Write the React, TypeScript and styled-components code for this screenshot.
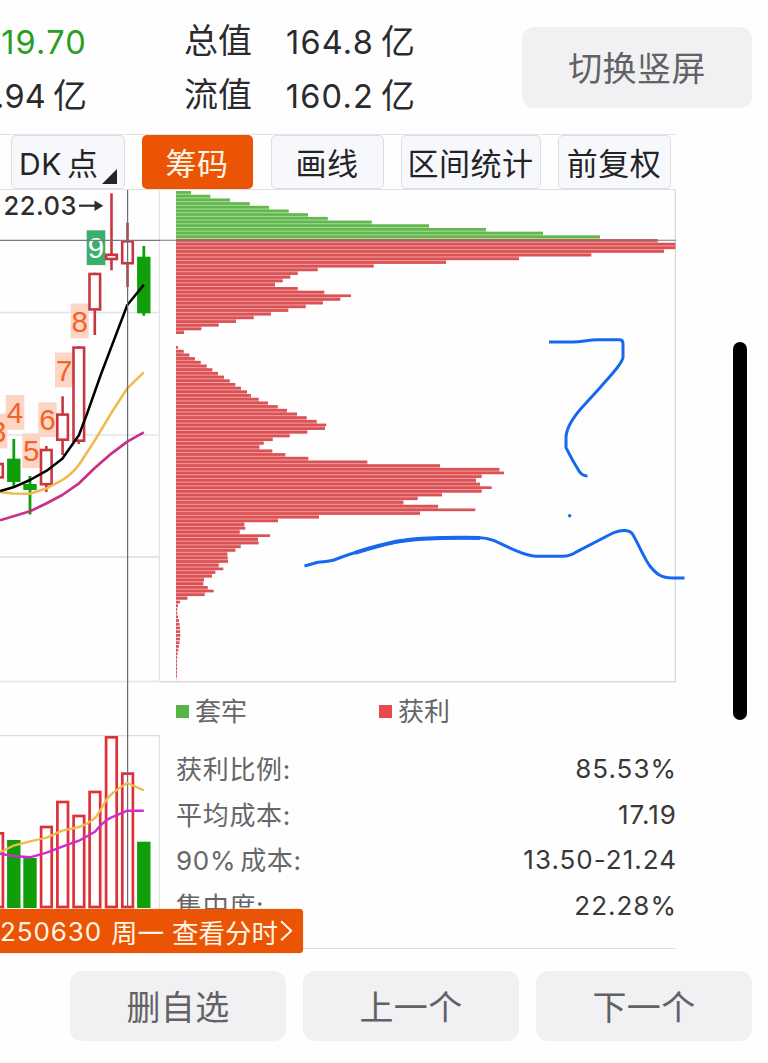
import React from "react";
import styled, { createGlobalStyle } from "styled-components";

const GlobalStyle = createGlobalStyle`
  *, *::before, *::after { box-sizing: border-box; }
  body {
    margin: 0;
    background: #fefefe;
    font-family: Inter, "Noto Sans CJK SC", sans-serif;
    color: #2b2b2d;
  }
`;

const Page = styled.main`
  position: relative;
  display: flex;
  flex-direction: column;
  width: 768px;
  height: 1063px;
  overflow: hidden;
  background: #fefefe;
  border-bottom: 1px solid #f5f5f5;
`;

const Header = styled.header`
  display: flex;
  height: 134px;
  padding: 15px 16px 0 0;
`;

const StatColumn = styled.div<{ $width: number; $align?: string; $gap?: number }>`
  display: flex;
  flex-direction: column;
  align-items: ${(p) => p.$align ?? "flex-start"};
  width: ${(p) => p.$width}px;
  margin-left: ${(p) => p.$gap ?? 0}px;
`;

const StatLine = styled.div<{ $color?: string; $spacing?: number }>`
  display: flex;
  align-items: center;
  height: 54px;
  font-size: 32.5px;
  letter-spacing: ${(p) => p.$spacing ?? 1.2}px;
  white-space: nowrap;
  color: ${(p) => p.$color ?? "#2b2b2d"};
`;

const StatName = styled.div`
  height: 54px;
  font-size: 34px;
  line-height: 52px;
  white-space: nowrap;
`;

const Unit = styled.span`
  margin-left: 7px;
  padding-bottom: 5px;
  font-size: 34px;
  letter-spacing: 0;
`;

const SoftButton = styled.button<{ $width: number; $height: number }>`
  display: flex;
  align-items: center;
  justify-content: center;
  flex: none;
  width: ${(p) => p.$width}px;
  height: ${(p) => p.$height}px;
  padding: 0 0 2px;
  border: 0;
  border-radius: 12px;
  background: #f1f1f4;
  color: #626264;
  font-family: inherit;
  font-size: 34px;
  letter-spacing: 0.4px;
`;

const SwitchButton = styled(SoftButton)`
  margin: 12px 0 0 auto;
`;

const Toolbar = styled.nav`
  display: flex;
  align-items: center;
  width: 676px;
  height: 56px;
  padding-left: 11px;
  border-top: 1px solid #e2e2e7;
  border-bottom: 1px solid #dfdfe4;
`;

const Tab = styled.button<{ $width: number; $gap: number; $active?: boolean }>`
  position: relative;
  flex: none;
  width: ${(p) => p.$width}px;
  height: 54px;
  margin-right: ${(p) => p.$gap}px;
  padding: 0 1px 1px 0;
  border: ${(p) => (p.$active ? "0" : "1.5px solid #dcdce3")};
  border-radius: 5px;
  background: ${(p) => (p.$active ? "#ea5404" : "#f7f8fc")};
  color: ${(p) => (p.$active ? "#fff5e6" : "#242426")};
  font-family: inherit;
  font-size: 31px;
  letter-spacing: 0.5px;
  white-space: nowrap;
`;

const TabLatin = styled.span`
  font-size: 30px;
  letter-spacing: 0.6px;
  margin-right: 5px;
`;

const DkLabel = styled.span`
  display: block;
  padding-left: 7px;
  text-align: left;
`;

const Corner = styled.i`
  position: absolute;
  right: 7px;
  bottom: 4px;
  border-left: 15px solid transparent;
  border-bottom: 15px solid #242426;
`;

const Body = styled.section`
  display: flex;
  height: 759px;
`;

const Charts = styled.div`
  display: flex;
  flex-direction: column;
  width: 160px;
`;

const Drawing = styled.svg`
  display: block;
  flex: none;
`;

const ChipPanel = styled.div`
  display: flex;
  flex-direction: column;
  width: 516px;
  border-bottom: 1px solid #dedee2;
`;

const Legend = styled.div`
  display: flex;
  align-items: center;
  height: 57px;
  padding: 0 0 0 16px;
`;

const LegendItem = styled.span<{ $color: string }>`
  display: flex;
  align-items: center;
  width: 203px;
  color: #666668;
  font-size: 26px;
  line-height: 38px;
  &::before {
    content: "";
    width: 13px;
    height: 13px;
    margin-right: 6px;
    background: ${(p) => p.$color};
  }
`;

const Metrics = styled.dl`
  margin: 0;
  padding: 7px 0 0 16px;
`;

const Metric = styled.div`
  display: flex;
  align-items: center;
  justify-content: space-between;
  height: 45.5px;
  font-size: 26px;
`;

const MetricName = styled.dt`
  padding-bottom: 4px;
  color: #666668;
  letter-spacing: 0.7px;
  word-spacing: -4px;
`;

const MetricValue = styled.dd`
  margin: 0 -1px 0 0;
  padding-bottom: 2px;
  color: #38383a;
  letter-spacing: 1px;
`;

const Rail = styled.aside`
  width: 92px;
  padding: 152px 0 0 57px;
`;

const RailHandle = styled.div`
  width: 14px;
  height: 378px;
  border-radius: 7px;
  background: #000;
`;

const DateBanner = styled.div`
  position: absolute;
  left: 0;
  top: 909px;
  display: flex;
  align-items: center;
  justify-content: flex-end;
  width: 303px;
  height: 44px;
  padding: 1px 9px 0 0;
  border-radius: 0 4px 4px 0;
  background: #ea5404;
  box-shadow: 0 0 1px #ea5404;
  color: #fff5e6;
  font-size: 26.5px;
  white-space: nowrap;
`;

const BannerDate = styled.span`
  font-size: 26px;
  letter-spacing: 0.9px;
  margin-right: 9px;
`;

const BannerDay = styled.span`
  margin-right: 8px;
`;

const Ink = styled.svg`
  position: absolute;
  left: 290px;
  top: 330px;
  pointer-events: none;
`;

const Footer = styled.footer`
  display: flex;
  justify-content: flex-end;
  gap: 17px;
  padding: 22px 16px 0 0;
`;

type Candle = { x: number; top: number; bottom: number; high: number; low: number; up: boolean };

const candles: Candle[] = [
  { x: -2.5, top: 462.7, bottom: 478.7, high: 462.7, low: 478.7, up: true },
  { x: 13.8, top: 458.7, bottom: 482, high: 439, low: 486, up: false },
  { x: 30, top: 484, bottom: 490, high: 476, low: 514.5, up: false },
  { x: 46.3, top: 448.7, bottom: 485.5, high: 446, low: 492, up: true },
  { x: 62.6, top: 413.3, bottom: 441, high: 396.3, low: 455, up: true },
  { x: 78.8, top: 346.3, bottom: 442, high: 346.3, low: 444, up: true },
  { x: 94.8, top: 272.7, bottom: 310.7, high: 272.7, low: 335, up: true },
  { x: 111.5, top: 253.5, bottom: 260.3, high: 193.3, low: 270.3, up: true },
  { x: 127.5, top: 240, bottom: 264.5, high: 222.7, low: 287, up: true },
  { x: 143.8, top: 256.7, bottom: 313.3, high: 246, low: 315.7, up: false },
];

const counts = [
  { n: "3", x: -11, y: 413.5, w: 18.3 },
  { n: "4", x: 5.7, y: 395, w: 18.6 },
  { n: "5", x: 22.3, y: 433.3, w: 17.7 },
  { n: "6", x: 38.3, y: 402.3, w: 18.4 },
  { n: "7", x: 55, y: 352.5, w: 18.3 },
  { n: "8", x: 70.7, y: 303.5, w: 18 },
  { n: "9", x: 86.7, y: 230.3, w: 18.6 },
];

const volumes = [
  { x: -2.5, y: 832, up: true },
  { x: 13.8, y: 841, up: false },
  { x: 30, y: 859, up: false },
  { x: 46.3, y: 825.7, up: true },
  { x: 62.6, y: 800.7, up: true },
  { x: 78.8, y: 814.7, up: true },
  { x: 94.8, y: 790.7, up: true },
  { x: 111.3, y: 736, up: true },
  { x: 127.5, y: 772.3, up: true },
  { x: 143.8, y: 842.7, up: false },
];

// Right end of every cost row, from the highest price down; 0 marks an empty row.
const chipEnds = [
  191, 210.3, 230, 249.7, 269, 288.7, 308, 327.7, 371.7, 429, 486, 543, 600,
  657.7, 675.5, 675.5, 664, 591.3, 519, 446, 373.7, 317.7, 297.7, 290.3, 282.7,
  275, 297.7, 324.3, 351, 340.3, 323, 305.7, 288.3, 271, 253.7, 236, 218.7,
  201.3, 184, 0, 0, 0, 178, 183.7, 189.3, 195, 200.7, 206.7, 212.3, 218, 224,
  229.7, 235.3, 241, 247, 251, 258.7, 268, 277.7, 287, 297, 306.7, 316.7, 326.3,
  325, 307.3, 289.7, 272.7, 263.7, 259.3, 272.3, 285.3, 308.3, 367.3, 440,
  499.3, 504, 481.7, 476, 480, 491.7, 481.7, 442, 417.7, 403.3, 438, 475.3, 420,
  319, 278, 244.3, 245.3, 239.7, 270, 258, 258.7, 240.7, 235.3, 227.3, 227.7,
  228, 218.7, 223.3, 215.3, 212, 204, 203.3, 207.7, 213.7, 204.7, 187.3, 180,
  178, 177.2, 177.2, 178, 179, 179.5, 180, 180.2, 180.4, 180, 179.5, 179, 178.3,
  177.6, 177.2, 177, 177, 177, 177, 177,
];

const CHIP_PITCH = 3.691;
const FIRST_PROFIT_ROW = 13;

function PriceChart() {
  return (
    <Drawing width="160" height="545" viewBox="0 190 160 545">
      <g stroke="#e3e3ec" strokeWidth="1.5">
        <path d="M0 312.5H159M0 435H159M0 681.5H159" />
        <path d="M0 557H159" strokeWidth="2" />
        <path d="M159.5 190V682" />
      </g>
      {counts.map((c) => (
        <g key={c.n}>
          <rect x={c.x} y={c.y} width={c.w} height="34.8" fill={c.n === "9" ? "#3dae6b" : "#fdd5c4"} />
          <text
            x={c.x + c.w / 2}
            y={c.y + 28}
            textAnchor="middle"
            fontFamily="Liberation Sans, sans-serif"
            fontSize="29.5"
            fill={c.n === "9" ? "#ffffff" : "#f06428"}
          >
            {c.n}
          </text>
        </g>
      ))}
      {candles.map((c) =>
        c.up ? (
          <g key={c.x} stroke="#c8373f" strokeWidth="2.6" fill="#fefefe">
            <path d={`M${c.x} ${c.high}V${c.low}`} />
            <rect x={c.x - 5.3} y={c.top + 1.3} width="10.6" height={c.bottom - c.top - 2.6} />
          </g>
        ) : (
          <g key={c.x} fill="#0f9f0a">
            <rect x={c.x - 1.4} y={c.high} width="2.8" height={c.low - c.high} />
            <rect x={c.x - 6.7} y={c.top} width="13.4" height={c.bottom - c.top} />
          </g>
        )
      )}
      <g fill="none" strokeWidth="2.5" strokeLinejoin="round">
        <path stroke="#c92f86" strokeWidth="2.7" d="M0 520.3L30 511.3L46.7 503.3L62.3 495L79 483.3L95 467.7L111.7 453.3L127.3 441.7L143.8 432.3" />
        <path stroke="#efb94c" d="M0 492L13 493.5L30 493.7L46.7 488.3L62.3 480Q72 474 79 464.7L95.7 439L111.7 412.3L127.3 388.3L143.8 372.3" />
        <path stroke="#000" d="M0 491L13.3 487.3L30 480L46.7 470.7L62.3 458.7L79 435L87.3 413L100.7 375L127.3 305L143.8 284.7" />
      </g>
      <text x="3.5" y="215" fontSize="25.5" fontWeight="500" textLength="73" fill="#2e2e30">22.03</text>
      <path d="M79 205.7H98" stroke="#2e2e30" strokeWidth="2.2" />
      <path d="M94.5 200.4L103.3 205.7L94.5 211Z" fill="#2e2e30" />
      <path d="M0 240.3H160" stroke="#77777c" strokeWidth="1.2" />
      <path d="M127.6 190V735" stroke="#6a6a70" strokeWidth="1.2" />
    </Drawing>
  );
}

function VolumeChart() {
  return (
    <Drawing width="160" height="175" viewBox="0 735 160 175">
      <path d="M0 735.7H159.5V910" fill="none" stroke="#dedee3" strokeWidth="1.3" />
      {volumes.map((v) =>
        v.up ? (
          <rect key={v.x} x={v.x - 5.2} y={v.y + 1.3} width="10.6" height={905.7 - v.y} fill="#fefefe" stroke="#dd3139" strokeWidth="2.7" />
        ) : (
          <rect key={v.x} x={v.x - 6.7} y={v.y - 1} width="13.4" height={909 - v.y} fill="#0f9f0a" />
        )
      )}
      <path d="M127.6 735V908" stroke="#6a6a70" strokeWidth="1.2" />
      <g fill="none" strokeWidth="2.4" strokeLinejoin="round">
        <path stroke="#f0ba4c" d="M0 852.3L13.3 845.7L30 841.3L46.7 837.7L62.3 830.7L79 827Q88 824 95.7 817.3Q102 808 107 799Q111 793 127.3 783L143.8 790.3" />
        <path stroke="#cf2ccf" d="M0 853.7L13.3 856L30 857.3L46.7 852.7L62.3 846.7L79 840.7L95 831.7Q104 821 111 817.7L127.3 810.7H143.8" />
      </g>
    </Drawing>
  );
}

function ChipChart() {
  return (
    <Drawing width="516" height="493" viewBox="160 190 516 493">
      <path d="M160 681.7H675.5V190" fill="none" stroke="#d9d9df" strokeWidth="1.6" />
      <path d="M176.5 600V681" stroke="#dcdce2" strokeWidth="0.8" />
      {chipEnds.map((end, i) => {
        const shared = Math.min(end, chipEnds[i + 1] ?? 0);
        return shared > 181 ? (
          <rect
            key={i}
            x="176"
            y={192.4 + i * CHIP_PITCH}
            width={shared - 176}
            height={CHIP_PITCH}
            fill={i < FIRST_PROFIT_ROW ? "#a3e296" : "#f6a09f"}
          />
        ) : null;
      })}
      {chipEnds.map((end, i) =>
        end ? (
          <rect
            key={i}
            x="176"
            y={192.4 + i * CHIP_PITCH - 1.35}
            width={end - 176}
            height="2.7"
            fill={i < FIRST_PROFIT_ROW ? "#65b551" : "#d95256"}
          />
        ) : null
      )}
      <path d="M160 240.3H676" stroke="#77777c" strokeWidth="1.1" />
    </Drawing>
  );
}

const metrics = [
  ["获利比例:", "85.53%"],
  ["平均成本:", "17.19"],
  ["90% 成本:", "13.50-21.24"],
  ["集中度:", "22.28%"],
];

export default function App() {
  return (
    <>
      <GlobalStyle />
      <Page>
        <Header>
          <StatColumn $width={87} $align="flex-end">
            <StatLine $color="#2a9d22">19.70</StatLine>
            <StatLine $spacing={0.2}>.94<Unit>亿</Unit></StatLine>
          </StatColumn>
          <StatColumn $width={70} $gap={97}>
            <StatName>总值</StatName>
            <StatName>流值</StatName>
          </StatColumn>
          <StatColumn $width={129} $gap={32} $align="flex-end">
            <StatLine>164.8<Unit>亿</Unit></StatLine>
            <StatLine>160.2<Unit>亿</Unit></StatLine>
          </StatColumn>
          <SwitchButton $width={230} $height={81}>切换竖屏</SwitchButton>
        </Header>

        <Toolbar>
          <Tab $width={114} $gap={17}>
            <DkLabel><TabLatin>DK</TabLatin>点</DkLabel>
            <Corner />
          </Tab>
          <Tab $width={111} $gap={18} $active>筹码</Tab>
          <Tab $width={113} $gap={17}>画线</Tab>
          <Tab $width={140} $gap={17}>区间统计</Tab>
          <Tab $width={113} $gap={0}>前复权</Tab>
        </Toolbar>

        <Body>
          <Charts>
            <PriceChart />
            <VolumeChart />
          </Charts>
          <ChipPanel>
            <ChipChart />
            <Legend>
              <LegendItem $color="#57b546">套牢</LegendItem>
              <LegendItem $color="#e84a4c">获利</LegendItem>
            </Legend>
            <Metrics>
              {metrics.map(([name, value]) => (
                <Metric key={name}>
                  <MetricName>{name}</MetricName>
                  <MetricValue>{value}</MetricValue>
                </Metric>
              ))}
            </Metrics>
          </ChipPanel>
          <Rail>
            <RailHandle />
          </Rail>
        </Body>

        <Footer>
          <SoftButton $width={216} $height={70}>删自选</SoftButton>
          <SoftButton $width={216} $height={70}>上一个</SoftButton>
          <SoftButton $width={216} $height={70}>下一个</SoftButton>
        </Footer>

        <DateBanner>
          <BannerDate>250630</BannerDate>
          <BannerDay>周一</BannerDay>
          <span>查看分时</span>
          <svg width="20" height="30" viewBox="0 0 20 30" fill="none" stroke="#fff5e6" strokeWidth="2.6">
            <path d="M4 1.5L16.5 13.5L4 25.5" />
          </svg>
        </DateBanner>

        <Ink width="400" height="260" viewBox="290 330 400 260" fill="none" stroke="#1668ee" strokeWidth="3" strokeLinejoin="round">
          <path d="M549 342H573C583 341.5 588 340 598 339.8H620Q623 340 623 344V357Q623 360 617 368C609 378 604 383 600 387.7L583.3 406C576 414 566 427 566 438V447.7Q572 460 579 471Q582 476 587.5 476" />
          <circle cx="569.7" cy="515.7" r="1.7" fill="#1668ee" stroke="none" />
          <path d="M304.5 566L318 562.3C323 561.3 327 562 334 560C352 553 385 543 405 540.5C430 537 450 537.7 480 537.7C496 538 505 548 526.7 554.5Q532 556 536 556.3H563Q570 556 576 552.2L610 534.5Q618 530.6 624 530.6Q630 530.6 632.5 534C638 543 643 556 649.5 565.5C657 575 662 578 672 578H684.5" />
          <path d="M355 552.8C380 545 395 541.5 405 540.5C430 537 450 537.9 480 537.9" strokeWidth="4" />
        </Ink>
      </Page>
    </>
  );
}
